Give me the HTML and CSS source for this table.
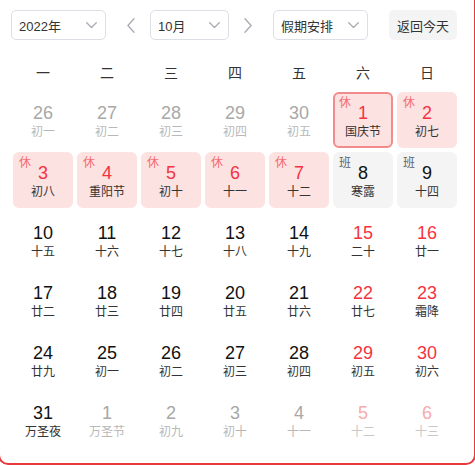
FILE: index.html
```html
<!DOCTYPE html>
<html lang="zh">
<head>
<meta charset="utf-8">
<link rel="stylesheet" href="styles.css">
</head>
<body>
<div class="frame">
  <div class="toolbar">
    <div class="select sel-year"><span>2022年</span><svg class="chev" width="11" height="7" viewBox="0 0 11 7"><polyline points="0.7,0.7 5.5,5.5 10.3,0.7"/></svg></div>
    <div class="arrow arrow-prev"><svg width="8" height="15" viewBox="0 0 8 15"><polyline points="7,0.8 0.9,7.5 7,14.2"/></svg></div>
    <div class="select sel-month"><span>10月</span><svg class="chev" width="11" height="7" viewBox="0 0 11 7"><polyline points="0.7,0.7 5.5,5.5 10.3,0.7"/></svg></div>
    <div class="arrow arrow-next"><svg width="8" height="15" viewBox="0 0 8 15"><polyline points="1,0.8 7.1,7.5 1,14.2"/></svg></div>
    <div class="select sel-holiday"><span>假期安排</span><svg class="chev" width="11" height="7" viewBox="0 0 11 7"><polyline points="0.7,0.7 5.5,5.5 10.3,0.7"/></svg></div>
    <div class="today-btn">返回今天</div>
  </div>

  <div class="weekdays">
    <div>一</div><div>二</div><div>三</div><div>四</div><div>五</div><div>六</div><div>日</div>
  </div>

  <div class="days">
    <div class="day other"><div class="cell"><span class="num">26</span><span class="lunar">初一</span></div></div>
    <div class="day other"><div class="cell"><span class="num">27</span><span class="lunar">初二</span></div></div>
    <div class="day other"><div class="cell"><span class="num">28</span><span class="lunar">初三</span></div></div>
    <div class="day other"><div class="cell"><span class="num">29</span><span class="lunar">初四</span></div></div>
    <div class="day other"><div class="cell"><span class="num">30</span><span class="lunar">初五</span></div></div>
    <div class="day rest today"><div class="cell"><span class="tag">休</span><span class="num">1</span><span class="lunar">国庆节</span></div></div>
    <div class="day rest"><div class="cell"><span class="tag">休</span><span class="num">2</span><span class="lunar">初七</span></div></div>

    <div class="day rest"><div class="cell"><span class="tag">休</span><span class="num">3</span><span class="lunar">初八</span></div></div>
    <div class="day rest"><div class="cell"><span class="tag">休</span><span class="num">4</span><span class="lunar">重阳节</span></div></div>
    <div class="day rest"><div class="cell"><span class="tag">休</span><span class="num">5</span><span class="lunar">初十</span></div></div>
    <div class="day rest"><div class="cell"><span class="tag">休</span><span class="num">6</span><span class="lunar">十一</span></div></div>
    <div class="day rest"><div class="cell"><span class="tag">休</span><span class="num">7</span><span class="lunar">十二</span></div></div>
    <div class="day work"><div class="cell"><span class="tag">班</span><span class="num">8</span><span class="lunar">寒露</span></div></div>
    <div class="day work"><div class="cell"><span class="tag">班</span><span class="num">9</span><span class="lunar">十四</span></div></div>

    <div class="day"><div class="cell"><span class="num">10</span><span class="lunar">十五</span></div></div>
    <div class="day"><div class="cell"><span class="num">11</span><span class="lunar">十六</span></div></div>
    <div class="day"><div class="cell"><span class="num">12</span><span class="lunar">十七</span></div></div>
    <div class="day"><div class="cell"><span class="num">13</span><span class="lunar">十八</span></div></div>
    <div class="day"><div class="cell"><span class="num">14</span><span class="lunar">十九</span></div></div>
    <div class="day weekend"><div class="cell"><span class="num">15</span><span class="lunar">二十</span></div></div>
    <div class="day weekend"><div class="cell"><span class="num">16</span><span class="lunar">廿一</span></div></div>

    <div class="day"><div class="cell"><span class="num">17</span><span class="lunar">廿二</span></div></div>
    <div class="day"><div class="cell"><span class="num">18</span><span class="lunar">廿三</span></div></div>
    <div class="day"><div class="cell"><span class="num">19</span><span class="lunar">廿四</span></div></div>
    <div class="day"><div class="cell"><span class="num">20</span><span class="lunar">廿五</span></div></div>
    <div class="day"><div class="cell"><span class="num">21</span><span class="lunar">廿六</span></div></div>
    <div class="day weekend"><div class="cell"><span class="num">22</span><span class="lunar">廿七</span></div></div>
    <div class="day weekend"><div class="cell"><span class="num">23</span><span class="lunar">霜降</span></div></div>

    <div class="day"><div class="cell"><span class="num">24</span><span class="lunar">廿九</span></div></div>
    <div class="day"><div class="cell"><span class="num">25</span><span class="lunar">初一</span></div></div>
    <div class="day"><div class="cell"><span class="num">26</span><span class="lunar">初二</span></div></div>
    <div class="day"><div class="cell"><span class="num">27</span><span class="lunar">初三</span></div></div>
    <div class="day"><div class="cell"><span class="num">28</span><span class="lunar">初四</span></div></div>
    <div class="day weekend"><div class="cell"><span class="num">29</span><span class="lunar">初五</span></div></div>
    <div class="day weekend"><div class="cell"><span class="num">30</span><span class="lunar">初六</span></div></div>

    <div class="day"><div class="cell"><span class="num">31</span><span class="lunar">万圣夜</span></div></div>
    <div class="day other"><div class="cell"><span class="num">1</span><span class="lunar">万圣节</span></div></div>
    <div class="day other"><div class="cell"><span class="num">2</span><span class="lunar">初九</span></div></div>
    <div class="day other"><div class="cell"><span class="num">3</span><span class="lunar">初十</span></div></div>
    <div class="day other"><div class="cell"><span class="num">4</span><span class="lunar">十一</span></div></div>
    <div class="day other weekend"><div class="cell"><span class="num">5</span><span class="lunar">十二</span></div></div>
    <div class="day other weekend"><div class="cell"><span class="num">6</span><span class="lunar">十三</span></div></div>
  </div>
</div>
</body>
</html>
```

FILE: styles.css
```css
html, body {
  margin: 0;
  padding: 0;
  background: #ffffff;
  overflow: hidden;
}

body {
  font-family: "Liberation Sans", "Noto Sans CJK SC", sans-serif;
  color: #333333;
}

.frame {
  box-sizing: border-box;
  width: 478px;
  height: 477px;
  margin: -12px 0 0 -2px;
  border: 2px solid #e8393d;
  border-radius: 10px;
  padding: 20px 0 0 11px;
  background: #ffffff;
}

/* toolbar */
.toolbar {
  display: flex;
  align-items: center;
  height: 30px;
}

.select {
  box-sizing: border-box;
  height: 30px;
  border: 1px solid #dcdfe6;
  border-radius: 5px;
  display: flex;
  align-items: center;
  justify-content: space-between;
  padding: 0 8px 0 7px;
  font-size: 13px;
  color: #333333;
}

.sel-year { width: 95px; }
.sel-month { width: 79px; margin-left: 11px; }
.sel-holiday { width: 95px; margin-left: 17px; }

.chev polyline,
.arrow polyline {
  fill: none;
  stroke: #a8abb2;
  stroke-width: 1.3;
  stroke-linecap: round;
  stroke-linejoin: round;
}

.arrow {
  width: 16px;
  height: 30px;
  display: flex;
  align-items: center;
  justify-content: center;
}

.arrow-prev { margin-left: 17px; }
.arrow-next { margin-left: 11px; }

.today-btn {
  margin-left: 21px;
  width: 68px;
  height: 30px;
  box-sizing: border-box;
  border-radius: 5px;
  background: #f4f4f5;
  font-size: 13px;
  color: #333333;
  display: flex;
  align-items: center;
  justify-content: center;
}

/* weekdays */
.weekdays {
  display: grid;
  grid-template-columns: repeat(7, 64px);
  margin-top: 16px;
  height: 34px;
  align-items: center;
  font-size: 14px;
  color: #333333;
}

.weekdays div {
  text-align: center;
  line-height: 34px;
}

/* days */
.days {
  display: grid;
  grid-template-columns: repeat(7, 64px);
  grid-auto-rows: 60px;
}

.day {
  padding: 2px;
  box-sizing: border-box;
}

.cell {
  position: relative;
  box-sizing: border-box;
  height: 56px;
  border-radius: 6px;
  display: flex;
  flex-direction: column;
  align-items: center;
  justify-content: center;
  padding-top: 3px;
}

.num {
  font-size: 18px;
  line-height: 20px;
  color: #111111;
}

.lunar {
  font-size: 12px;
  line-height: 18px;
  color: #333333;
}

.tag {
  position: absolute;
  left: 6px;
  top: 3px;
  font-size: 12px;
  line-height: 16px;
}

.today .tag { left: 4px; top: 1px; }

.weekend .num { color: #f5333f; }

.rest .cell { background: #fde2e2; }
.rest .num { color: #f5333f; }
.rest .tag { color: #f56c6c; }

.work .cell { background: #f4f4f5; }
.work .tag { color: #606266; }

.today .cell { border: 2px solid #f28b8b; }

.other .num { color: #a8a8a8; }
.other .lunar { color: #b8b8b8; }
.other.weekend .num { color: #f8abab; }
.other.weekend .lunar { color: #c8c8c8; }
```
